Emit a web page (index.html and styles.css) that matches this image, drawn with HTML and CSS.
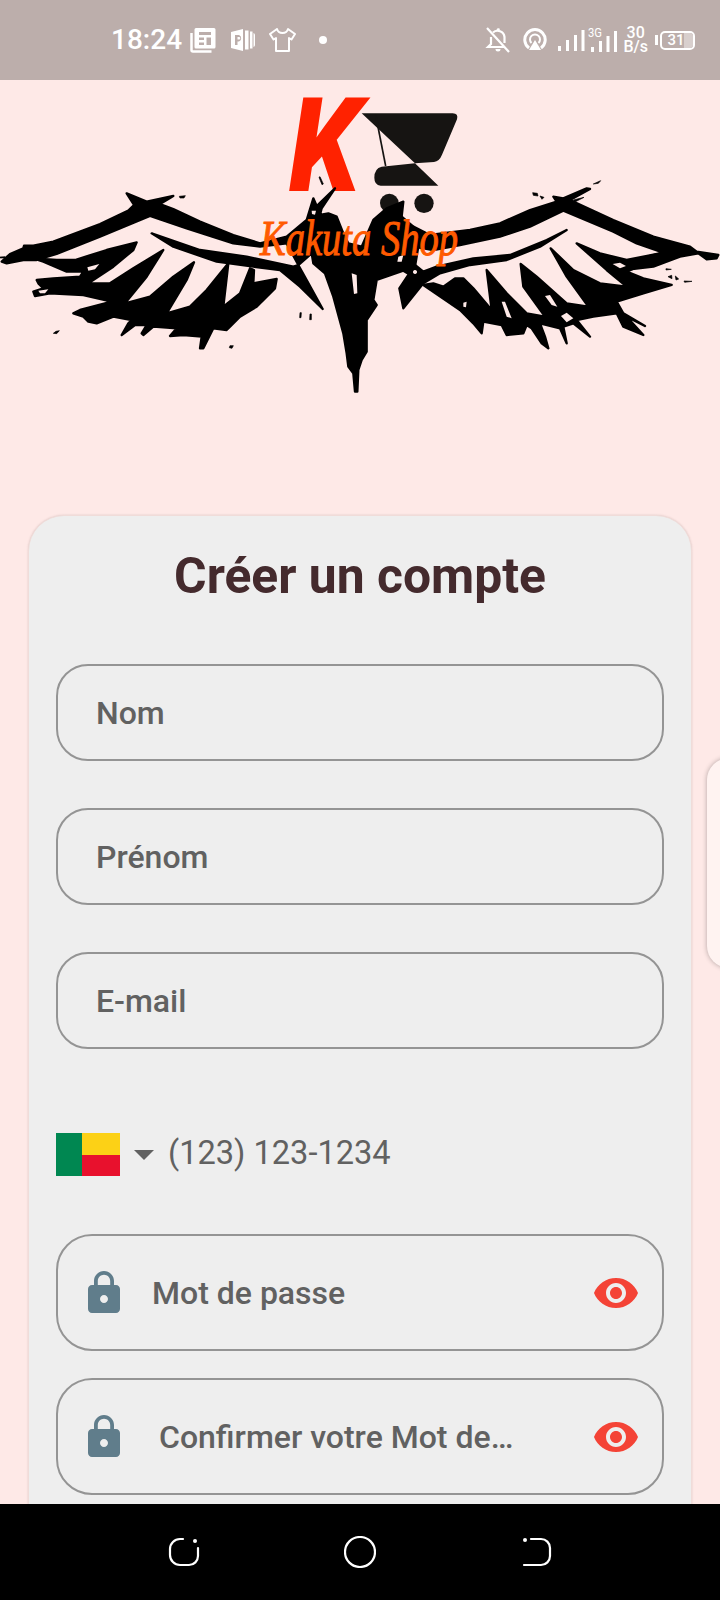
FILE: index.html
```html
<!DOCTYPE html>
<html lang="fr">
<head>
<meta charset="utf-8">
<title>Créer un compte</title>
<link rel="stylesheet" href="styles.css">
</head>
<body>
<div class="app">
  <header class="status">
    <div class="status-left">
      <span class="time">18:24</span>
      <svg class="ic-news" width="26" height="26" viewBox="0 0 26 26"><path class="white" d="M6 1h18a1.500 1.500 0 0 1 1.500 1.500V20a1.500 1.500 0 0 1-1.500 1.500H6A1.500 1.500 0 0 1 4.500 20V2.500A1.500 1.500 0 0 1 6 1zM9 5v3h12V5zm0 5.500v2.500h5v-2.500zm7.500 0v7.500h4.500v-7.500zM9 15.500V18h5v-2.500z" fill-rule="evenodd"/><path class="line" d="M1.500 6v17a1.500 1.500 0 0 0 1.500 1.500h18.500" stroke-width="2.500"/></svg>
      <svg class="ic-p" width="26" height="26" viewBox="0 0 26 26"><path class="white" d="M1 5l12-3v22L1 21zM5 8v10h2.500v-3.500H9a3.500 3.500 0 0 0 0-6.500zm2.500 2H9a1.300 1.300 0 0 1 0 2.600H7.500z" fill-rule="evenodd"/><path class="white" d="M15 3.500h3.500v19H15zM20 4.500h2.500v17H20zM23.500 6a2 2 0 0 1 1.500 2v10a2 2 0 0 1-1.500 2z"/></svg>
      <svg class="ic-shirt" width="28" height="26" viewBox="0 0 28 26"><path class="line" d="M9 2L2 7l3.500 5.500L8 11v13h13V11l2.500 1.500L27 7l-7-5c-.8 3-3 4-5.500 4S9.800 5 9 2z" stroke-width="2" stroke-linejoin="round"/></svg>
      <span class="dot"></span>
    </div>
    <div class="status-right">
      <svg class="ic-bell" width="26" height="26" viewBox="0 0 26 26"><path class="line" d="M2 1l22 24" stroke-width="2.200"/><path class="line" d="M6 10v7l-3 3h17M8 5.500A7 7 0 0 1 19.500 10v6" stroke-width="2.200"/><path class="white" d="M10.500 22h5a2.500 2.500 0 0 1-5 0zM11.500 3a2 2 0 0 1 3.500-1l-1 2z"/></svg>
      <svg class="ic-hot" width="24" height="24" viewBox="0 0 24 24"><path class="line" d="M6 20A10.200 10.200 0 1 1 18 20" stroke-width="3"/><path class="line" d="M8.500 15A5 5 0 1 1 15.500 15" stroke-width="2"/><path class="white" d="M12 12l6 10H6z"/></svg>
      <svg class="ic-sig" width="27" height="21" viewBox="0 0 27 21"><path class="white" d="M0 16h3v5H0zM8 10h3v11H8zM16 5h3v16h-3zM23.500 0h3v21h-3z"/></svg>
      <svg class="ic-sig2" width="29" height="26" viewBox="0 0 29 26"><text class="tiny" x="0" y="11" textLength="14" lengthAdjust="spacingAndGlyphs">3G</text><path class="white" d="M3 21h3v5H3zM11 15h3v11h-3zM18.500 10h3v16h-3zM26 5h3v21h-3z"/></svg>
      <div class="speed"><span>30</span><span>B/s</span></div>
      <span class="nub"></span>
      <div class="battery"><span class="batt-fill"></span><span class="batt-num">31</span></div>
    </div>
  </header>

  <main class="content">
    <div class="logo">
      <svg class="logo-art" width="720" height="435" viewBox="0 80 720 435">
        <text class="logo-k" transform="translate(289 191) scale(.87 1)">K</text>
        <g transform="translate(360 80) scale(.33333)">
          <path class="cart" d="M5 100H278Q296 100 291 118L246 224Q238 244 222 246L165 250ZM65 260L165 250L235 317H62Q43 315 43 293Q43 265 65 260Z"/>
          <path class="cart-line" d="M47 105L77 258"/>
          <circle class="cart" cx="88" cy="369" r="28"/>
          <circle class="cart" cx="192" cy="370" r="29"/>
        </g>
        <g transform="translate(0 80) scale(.33333)">
          <path class="ink" d="M5 545L30 522L70 505L72 497L100 497L160 485L300 432L385 392L402 375L380 340L440 365L520 348L480 372L520 387L600 425L700 465L780 490L860 470L920 420L940 355L950 378L1005 325L965 385L960 405L985 400L1010 410L1030 460L1045 490L1085 500L1120 420L1160 385L1210 365L1205 410L1240 440L1255 500L1240 590L1210 572L1130 600L1120 660L1130 675L1100 720L1100 815L1085 840L1075 870L1072 935L1065 935L1060 880L1045 860L1040 820L1030 760L1000 650L975 580L940 550L935 520L895 555L860 490L780 500L700 490L560 445L450 408L300 470L170 522L110 540L70 540L20 550Z"/>
          <path class="ink" d="M455 460L600 510L740 530L880 560L895 555L920 600L968 687L900 620L840 570L760 560L650 545L520 500Z"/>
          <path class="ink" d="M100 535L170 540L225 540L320 510L410 487L400 510L340 560L265 610L330 610L400 565L490 510L440 590L375 670L450 650L520 590L582 547L560 600L500 700L570 680L620 630L685 550L670 680L720 640L750 565L762 570L760 610L830 597L825 625L770 680L720 710L690 740L680 750L640 745L610 805L600 805L605 770L550 765L510 768L530 745L460 740L430 765L425 760L440 735L405 735L365 765L385 730L395 720L340 710L290 730L265 725L250 710L220 700L240 690L335 665L250 645L150 640L105 648L100 635L130 625L115 610L110 600L160 595L240 590L250 575L200 575L130 545Z"/>
          <path class="hole" d="M262 562L298 552L285 568L265 572ZM115 632L145 628L135 640L120 640ZM1055 580L1070 585L1072 640L1062 642ZM935 392L948 392L945 404L936 402Z"/>
          <path class="ink-fine" d="M538 349L556 347L552 354L540 354ZM168 754L178 752L170 761L160 760ZM690 797L700 797L696 805L688 803ZM900 698L904 698L903 713L899 713ZM930 702L934 702L934 719L929 719ZM960 290L970 312L966 314L957 292ZM0 531L15 530L15 534L0 534Z"/>
        </g>
        <g transform="translate(360 80) scale(.33333)">
          <path class="ink" d="M160 440L210 465L330 450L420 430L510 390L590 365L580 350L610 355L680 325L690 327L630 360L760 420L880 470L990 500L1010 515L1075 525L1070 535L1040 538L1015 520L960 530L880 560L790 570L760 555L910 518L830 490L760 455L610 392L510 440L420 470L300 495L220 510L160 500Z"/>
          <path class="ink" d="M620 450L560 480L450 525L340 535L230 560L190 575L165 555L118 625L130 685L190 610L240 580L330 555L440 540L540 500Z"/>
          <path class="ink" d="M190 615L220 610L250 620L285 595L310 595L340 625L395 690L380 570L440 640L500 700L555 710L490 620L482 552L530 590L620 670L685 680L620 590L572 505L640 570L720 610L800 620L740 570L650 490L720 520L800 540L910 518L880 540L800 575L850 595L935 615L850 640L770 665L790 700L855 738L800 710L850 765L790 740L770 700L700 710L650 720L690 770L640 730L610 740L620 790L600 745L540 730L555 770L565 805L545 790L515 745L500 735L490 760L440 765L425 735L370 725L365 760L340 730L300 690Z"/>
          <path class="hole" d="M758 552L780 548L798 558L780 565ZM603 708L620 698L640 715L620 727ZM555 648L570 645L592 680L575 675ZM310 668L320 665L318 682L310 680ZM165 570a6 6 0 1 0 .1 0ZM425 665L435 665L455 715L440 710ZM115 530L130 525L125 545L112 545Z"/>
          <path class="ink-fine" d="M518 338L532 340L534 348L520 346ZM540 348L552 352L546 358ZM700 312L722 302L715 310ZM640 360L672 352L645 366ZM918 566L934 568L918 570ZM924 590L935 586L936 596ZM946 588L956 597L948 600ZM972 603L996 604L974 607Z"/>
        </g>
        <text class="logo-name" x="260" y="255" textLength="198" lengthAdjust="spacingAndGlyphs">Kakuta Shop</text>
      </svg>
    </div>

    <section class="card">
      <h1 class="title">Créer un compte</h1>
      <div class="field">Nom</div>
      <div class="field">Prénom</div>
      <div class="field">E-mail</div>
      <div class="phone">
        <span class="flag"><span class="flag-green"></span><span class="flag-bands"><span class="flag-yellow"></span><span class="flag-red"></span></span></span>
        <span class="caret"></span>
        <span class="phone-text">(123) 123-1234</span>
      </div>
      <div class="field field-pw">
        <svg class="lock" width="48" height="48" viewBox="0 0 24 24"><path d="M18 8h-1V6c0-2.760-2.240-5-5-5S7 3.240 7 6v2H6c-1.100 0-2 .9-2 2v10c0 1.100.9 2 2 2h12c1.100 0 2-.9 2-2V10c0-1.100-.9-2-2-2zm-6 9c-1.100 0-2-.9-2-2s.9-2 2-2 2 .9 2 2-.9 2-2 2zm3.100-9H8.900V6c0-1.710 1.390-3.100 3.100-3.100 1.710 0 3.100 1.390 3.100 3.100v2z"/></svg>
        <span class="pw-label">Mot de passe</span>
        <svg class="eye" width="48" height="48" viewBox="0 0 24 24"><path d="M12 4.500C7 4.500 2.730 7.610 1 12c1.730 4.390 6 7.500 11 7.500s9.270-3.110 11-7.500c-1.730-4.390-6-7.500-11-7.500zM12 17c-2.760 0-5-2.240-5-5s2.240-5 5-5 5 2.240 5 5-2.240 5-5 5zm0-8c-1.660 0-3 1.340-3 3s1.340 3 3 3 3-1.340 3-3-1.340-3-3-3z"/></svg>
      </div>
      <div class="field field-pw field-confirm">
        <svg class="lock" width="48" height="48" viewBox="0 0 24 24"><path d="M18 8h-1V6c0-2.760-2.240-5-5-5S7 3.240 7 6v2H6c-1.100 0-2 .9-2 2v10c0 1.100.9 2 2 2h12c1.100 0 2-.9 2-2V10c0-1.100-.9-2-2-2zm-6 9c-1.100 0-2-.9-2-2s.9-2 2-2 2 .9 2 2-.9 2-2 2zm3.100-9H8.900V6c0-1.710 1.390-3.100 3.100-3.100 1.710 0 3.100 1.390 3.100 3.100v2z"/></svg>
        <span class="pw-label">Confirmer votre Mot de passe</span>
        <svg class="eye" width="48" height="48" viewBox="0 0 24 24"><path d="M12 4.500C7 4.500 2.730 7.610 1 12c1.730 4.390 6 7.500 11 7.500s9.270-3.110 11-7.500c-1.730-4.390-6-7.500-11-7.500zM12 17c-2.760 0-5-2.240-5-5s2.240-5 5-5 5 2.240 5 5-2.240 5-5 5zm0-8c-1.660 0-3 1.340-3 3s1.340 3 3 3 3-1.340 3-3-1.340-3-3-3z"/></svg>
      </div>
    </section>
    <div class="side-tab"></div>
  </main>

  <nav class="navbar">
    <svg class="nav-ic" width="32" height="32" viewBox="0 0 32 32"><path d="M15 3H12A10 10 0 0 0 2 13V19A10 10 0 0 0 12 29H21A9 9 0 0 0 30 20V12"/><circle cx="27" cy="5" r="2"/></svg>
    <svg class="nav-ic" width="32" height="32" viewBox="0 0 32 32"><circle class="ring" cx="16" cy="16" r="15"/></svg>
    <svg class="nav-ic" width="32" height="32" viewBox="0 0 32 32"><path d="M11 3H21A9 9 0 0 1 30 12V20A9 9 0 0 1 21 29H4"/><circle cx="5" cy="4" r="2"/></svg>
  </nav>
</div>
</body>
</html>
```

FILE: styles.css
```css
* { box-sizing: border-box; }
html, body { margin: 0; padding: 0; }
body { font-family: Roboto, "Liberation Sans", sans-serif; background: #fee9e7; }
.app { width: 720px; height: 1600px; display: flex; flex-direction: column; overflow: hidden; }

.status { height: 80px; flex: none; background: #bcaeab; color: #fff; display: flex; justify-content: space-between; align-items: center; padding: 0 25px 0 111px; }
.status-left, .status-right { display: flex; align-items: center; }
.time { font-size: 28px; font-weight: 500; line-height: 32px; }
.white { fill: #fff; }
.line { fill: none; stroke: #fff; }
.ic-news { margin-left: 8px; }
.ic-p { margin-left: 14px; }
.ic-shirt { margin-left: 12px; }
.dot { width: 8px; height: 8px; border-radius: 50%; background: #fff; margin-left: 23px; }
.ic-hot { margin-left: 12px; }
.ic-sig { margin-left: 11px; }
.ic-sig2 { margin-left: 3px; margin-top: -2px; overflow: visible; }
.tiny { font-size: 12px; fill: #fff; font-family: Roboto, sans-serif; }
.speed { display: flex; flex-direction: column; align-items: center; margin-left: 6px; font-size: 16px; line-height: 14px; font-weight: 500; }
.nub { width: 3px; height: 10px; background: #fff; margin-left: 7px; }
.battery { position: relative; width: 35px; height: 19px; margin-left: 2px; border: 2px solid #fff; border-radius: 5px; display: flex; align-items: center; justify-content: center; overflow: hidden; }
.batt-fill { position: absolute; right: 0; top: 0; bottom: 0; width: 9px; background: #d8cfcd; }
.batt-num { position: relative; font-size: 15px; font-weight: 500; line-height: 15px; margin-right: 3px; }

.content { position: relative; flex: 1; overflow: hidden; min-height: 0; }
.logo { height: 435px; }
.logo-art { display: block; overflow: visible; }
.logo-k { font-family: Roboto, sans-serif; font-weight: 900; font-style: italic; font-size: 132px; fill: #ff2200; }
.cart { fill: #161412; }
.cart-line { stroke: #161412; stroke-width: 5; fill: none; }
.ink { fill: #000; stroke: #000; stroke-width: 7; stroke-linejoin: round; }
.ink-fine { fill: #000; stroke: #000; stroke-width: 2; stroke-linejoin: round; }
.hole { fill: #fee9e7; }
.logo-name { font-family: "Liberation Serif", serif; font-style: italic; font-size: 50px; fill: #ff5a00; stroke: #ff5a00; stroke-width: 1; }

.card { width: 664px; margin: 0 28px; height: 1100px; background: #eeeeee; border: 1px solid #f0dcd9; border-radius: 36px; padding: 30px 27px 0; box-shadow: 0 0 2px rgba(120, 90, 90, .25); }
.title { margin: 0 0 58px; font-size: 49.800px; font-weight: 700; line-height: 60px; text-align: center; color: #442a2d; }
.field { height: 97px; border: 2px solid #949494; border-radius: 32px; padding: 0 38px; margin-bottom: 47px; display: flex; align-items: center; font-size: 32px; font-weight: 500; color: #616161; }
.phone { display: flex; align-items: center; height: 43px; margin: 84px 0 58px; }
.flag { display: flex; width: 64px; height: 43px; }
.flag-green { width: 26px; background: #008751; }
.flag-bands { flex: 1; display: flex; flex-direction: column; }
.flag-yellow { flex: 1; background: #fcd116; }
.flag-red { flex: 1; background: #e8112d; }
.caret { width: 0; height: 0; border-left: 10px solid transparent; border-right: 10px solid transparent; border-top: 10px solid #616161; margin-left: 14px; }
.phone-text { margin-left: 14px; margin-bottom: 4px; font-size: 32.600px; color: #616161; }
.field-pw { height: 117px; margin-bottom: 27px; padding: 0 22px; border-radius: 36px; }
.lock { flex: none; fill: #607d8b; }
.eye { flex: none; fill: #f44336; margin-left: auto; }
.pw-label { margin-left: 24px; }
.field-confirm .pw-label { margin-left: 31px; width: 356px; white-space: nowrap; overflow: hidden; text-overflow: ellipsis; }
.side-tab { position: absolute; top: 678px; right: -31px; width: 44px; height: 210px; background: #fff3f1; border-radius: 24px; box-shadow: 0 0 5px rgba(0, 0, 0, .3); }

.navbar { height: 96px; flex: none; background: #000; display: flex; justify-content: center; align-items: center; gap: 144px; position: relative; }
.nav-ic { fill: #fff; }
.nav-ic path, .nav-ic .ring { fill: none; stroke: #fff; stroke-width: 2.200; stroke-linecap: round; }
```
